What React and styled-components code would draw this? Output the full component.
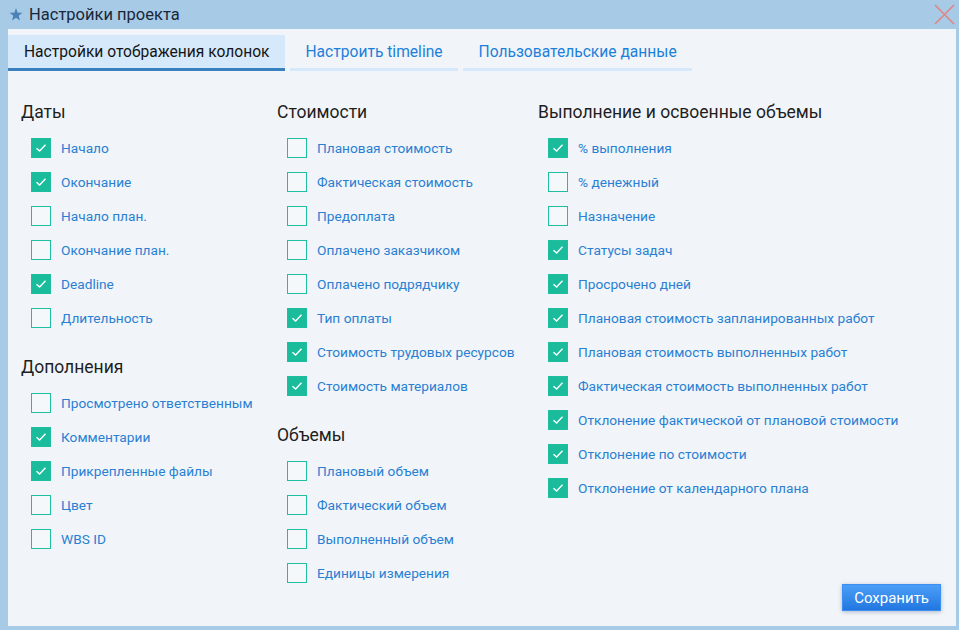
import React, { useState } from "react";
import styled, { createGlobalStyle } from "styled-components";

const GlobalStyle = createGlobalStyle`
  html, body {
    margin: 0;
    padding: 0;
    background: #a7cae6;
  }
  * {
    box-sizing: border-box;
  }
`;

const Window = styled.div`
  width: 959px;
  height: 630px;
  display: flex;
  flex-direction: column;
  background: #a7cae6;
  padding: 0 3px 4px 8px;
  font-family: "Roboto", "Liberation Sans", sans-serif;
`;

const TitleBar = styled.div`
  flex: none;
  height: 29px;
  display: flex;
  align-items: center;
  margin-left: -8px;
  margin-right: -3px;
  padding-left: 9px;
  padding-right: 4px;
`;

const Title = styled.div`
  flex: 1;
  margin-left: 6px;
  font-size: 16.5px;
  color: #18283a;
`;

const CloseButton = styled.button`
  width: 22px;
  height: 22px;
  padding: 0;
  border: 0;
  background: none;
  cursor: pointer;
  display: flex;
  align-items: center;
  justify-content: center;
`;

const Body = styled.div`
  flex: 1;
  min-height: 0;
  display: flex;
  flex-direction: column;
  background: #f1f5f9;
  padding-top: 6px;
`;

const Tabs = styled.div`
  flex: none;
  display: flex;
  gap: 5px;
`;

const Tab = styled.div`
  height: 36px;
  padding: 0 15px 0 16px;
  display: flex;
  align-items: center;
  font-size: 15.6px;
  color: ${({ $active }) => ($active ? "#141414" : "#1d7fd9")};
  background: ${({ $active }) => ($active ? "#d5e9fb" : "transparent")};
  border-bottom: 3px solid
    ${({ $active }) => ($active ? "#3a80bf" : "#d5e9fb")};
  cursor: pointer;
`;

const Columns = styled.div`
  flex: 1;
  min-height: 0;
  display: grid;
  grid-template-columns: 256px 261px 1fr;
  padding: 29px 15px 15px 13px;
`;

const Column = styled.div`
  display: flex;
  flex-direction: column;
  gap: 20px;
`;

const Section = styled.div``;

const Heading = styled.div`
  font-size: 17.5px;
  line-height: 24px;
  color: #1e1e1e;
  margin-bottom: 7px;
`;

const Row = styled.label`
  height: 34px;
  display: flex;
  align-items: center;
  padding-left: 10px;
  gap: 10px;
  cursor: pointer;
`;

const Box = styled.span`
  width: 20px;
  height: 20px;
  flex: none;
  display: flex;
  align-items: center;
  justify-content: center;
  border: 1.5px solid #1ebe9e;
  background: ${({ $checked }) => ($checked ? "#1abc9c" : "#f4f8fa")};
`;

const Label = styled.span`
  font-size: 13.7px;
  color: #2a7fd3;
  white-space: nowrap;
`;

const SaveButton = styled.button`
  margin-top: auto;
  align-self: flex-end;
  height: 27px;
  padding: 0 11px;
  border: 1px solid #3b8ff0;
  background: linear-gradient(#4c9ff7, #2277e0);
  color: #fff;
  font-family: inherit;
  font-size: 15px;
  box-shadow: 0 1px 4px rgba(40, 70, 110, 0.35);
  cursor: pointer;
`;

const Check = () => (
  <svg width="12" height="10" viewBox="0 0 12 10">
    <path
      d="M1.5 5.2 L4.6 8 L10.5 1.8"
      fill="none"
      stroke="#fff"
      strokeWidth="1.4"
    />
  </svg>
);

const Star = () => (
  <svg width="14" height="13" viewBox="0 0 24 23">
    <path
      d="M12 0 L14.9 8.2 L23.5 8.4 L16.7 13.7 L19.1 22 L12 17.1 L4.9 22 L7.3 13.7 L0.5 8.4 L9.1 8.2 Z"
      fill="#4a81b7"
    />
  </svg>
);

const Cross = () => (
  <svg width="21" height="21" viewBox="0 0 21 21">
    <path
      d="M1 1 L20 20 M20 1 L1 20"
      stroke="#e48383"
      strokeWidth="1.6"
    />
  </svg>
);

const columns = [
  [
    {
      title: "Даты",
      items: [
        ["Начало", true],
        ["Окончание", true],
        ["Начало план.", false],
        ["Окончание план.", false],
        ["Deadline", true],
        ["Длительность", false],
      ],
    },
    {
      title: "Дополнения",
      items: [
        ["Просмотрено ответственным", false],
        ["Комментарии", true],
        ["Прикрепленные файлы", true],
        ["Цвет", false],
        ["WBS ID", false],
      ],
    },
  ],
  [
    {
      title: "Стоимости",
      items: [
        ["Плановая стоимость", false],
        ["Фактическая стоимость", false],
        ["Предоплата", false],
        ["Оплачено заказчиком", false],
        ["Оплачено подрядчику", false],
        ["Тип оплаты", true],
        ["Стоимость трудовых ресурсов", true],
        ["Стоимость материалов", true],
      ],
    },
    {
      title: "Объемы",
      items: [
        ["Плановый объем", false],
        ["Фактический объем", false],
        ["Выполненный объем", false],
        ["Единицы измерения", false],
      ],
    },
  ],
  [
    {
      title: "Выполнение и освоенные объемы",
      items: [
        ["% выполнения", true],
        ["% денежный", false],
        ["Назначение", false],
        ["Статусы задач", true],
        ["Просрочено дней", true],
        ["Плановая стоимость запланированных работ", true],
        ["Плановая стоимость выполненных работ", true],
        ["Фактическая стоимость выполненных работ", true],
        ["Отклонение фактической от плановой стоимости", true],
        ["Отклонение по стоимости", true],
        ["Отклонение от календарного плана", true],
      ],
    },
  ],
];

const tabs = [
  "Настройки отображения колонок",
  "Настроить timeline",
  "Пользовательские данные",
];

export default function App() {
  const [active, setActive] = useState(0);
  const [state, setState] = useState(() => {
    const s = {};
    columns.flat().forEach((sec) =>
      sec.items.forEach(([name, on]) => {
        s[name] = on;
      })
    );
    return s;
  });

  const toggle = (name) => setState((s) => ({ ...s, [name]: !s[name] }));

  return (
    <>
      <GlobalStyle />
      <Window>
        <TitleBar>
          <Star />
          <Title>Настройки проекта</Title>
          <CloseButton>
            <Cross />
          </CloseButton>
        </TitleBar>
        <Body>
          <Tabs>
            {tabs.map((t, i) => (
              <Tab key={t} $active={i === active} onClick={() => setActive(i)}>
                {t}
              </Tab>
            ))}
          </Tabs>
          <Columns>
            {columns.map((col, ci) => (
              <Column key={ci}>
                {col.map((sec) => (
                  <Section key={sec.title}>
                    <Heading>{sec.title}</Heading>
                    {sec.items.map(([name]) => (
                      <Row key={name} onClick={() => toggle(name)}>
                        <Box $checked={state[name]}>
                          {state[name] && <Check />}
                        </Box>
                        <Label>{name}</Label>
                      </Row>
                    ))}
                  </Section>
                ))}
                {ci === columns.length - 1 && (
                  <SaveButton>Сохранить</SaveButton>
                )}
              </Column>
            ))}
          </Columns>
        </Body>
      </Window>
    </>
  );
}
